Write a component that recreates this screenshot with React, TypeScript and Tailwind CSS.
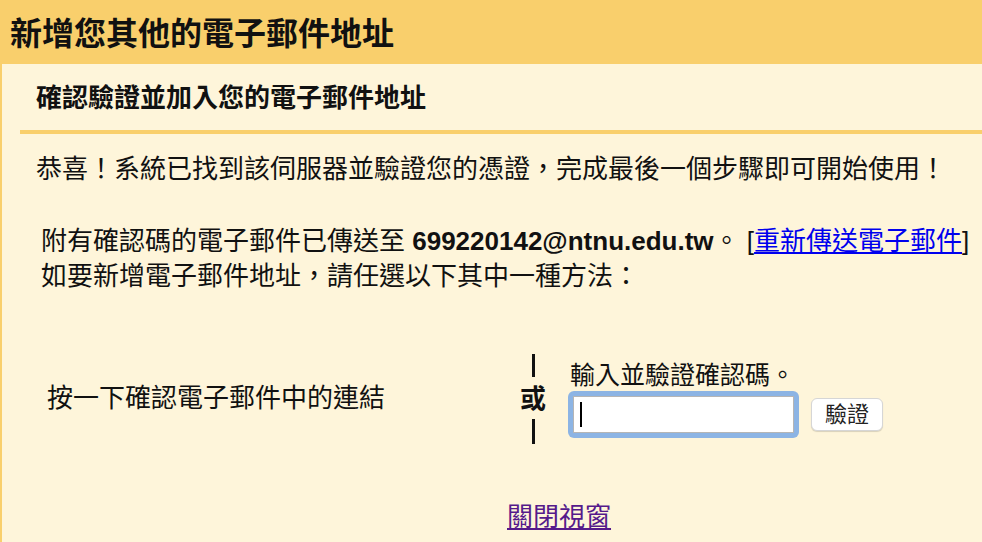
import React from "react";

export default function App() {
  return (
    <div className="w-[982px] h-[542px] overflow-hidden bg-[#fef5da] text-[#111] font-['Liberation_Sans','Noto_Sans_CJK_TC',sans-serif]">
      <div className="h-16 bg-[#f9cf6c] pl-[10px] flex items-center">
        <h1 className="text-[32px] font-bold leading-none pt-[4px]">新增您其他的電子郵件地址</h1>
      </div>
      <div className="h-[478px] border-l-2 border-[#f9cf6c]">
        <div className="pl-[34px] pt-[18px] h-[66px] text-[26px] font-bold leading-[32px]">確認驗證並加入您的電子郵件地址</div>
        <div className="ml-[18px] h-[4px] bg-[#f9cf6c]" />
        <div className="pl-[34px] pt-[17px] text-[26px] leading-[36px]">
          恭喜！系統已找到該伺服器並驗證您的憑證，完成最後一個步驟即可開始使用！
        </div>
        <div className="pl-[39px] pt-[37px] text-[26px] leading-[35px]">
          <div>
            附有確認碼的電子郵件已傳送至 <b className="font-bold">699220142@ntnu.edu.tw</b>。 [
            <a href="#" className="text-[#0000ee] underline">重新傳送電子郵件</a>]
          </div>
          <div>如要新增電子郵件地址，請任選以下其中一種方法：</div>
        </div>
        <div className="flex items-start mt-[60px]">
          <div className="w-[507px] pl-[45px] pt-[26px] text-[26px] leading-[36px]">按一下確認電子郵件中的連結</div>
          <div className="w-[48px] flex flex-col items-center text-[26px] font-bold leading-none">
            <div className="w-[3px] h-[23px] bg-[#111]" />
            <div className="mt-[9px] mb-[7px] h-[26px]">或</div>
            <div className="w-[3px] h-[25px] bg-[#111]" />
          </div>
          <div className="pl-[11px] pt-[6px]">
            <div className="ml-[2px] text-[25px] leading-[30px] whitespace-nowrap">輸入並驗證確認碼。</div>
            <div className="flex items-center mt-[1px]">
              <div className="w-[231px] h-[47px] rounded-[6px] bg-[#8cb4e4] p-[5px]">
                <div className="w-full h-full bg-white border border-[#b5b5b5] flex items-center pl-[6px]">
                  <div className="w-[2px] h-[25px] bg-black" />
                </div>
              </div>
              <button className="ml-[12px] w-[72px] h-[33px] rounded-[6px] bg-white border border-[#d6d6d6] shadow-[0_1px_1px_rgba(0,0,0,0.15)] text-[22px] leading-none text-[#222]">驗證</button>
            </div>
          </div>
        </div>
        <div className="pl-[505px] pt-[58px] text-[26px] leading-[30px]">
          <a href="#" className="text-[#551a8b] underline">關閉視窗</a>
        </div>
      </div>
    </div>
  );
}
